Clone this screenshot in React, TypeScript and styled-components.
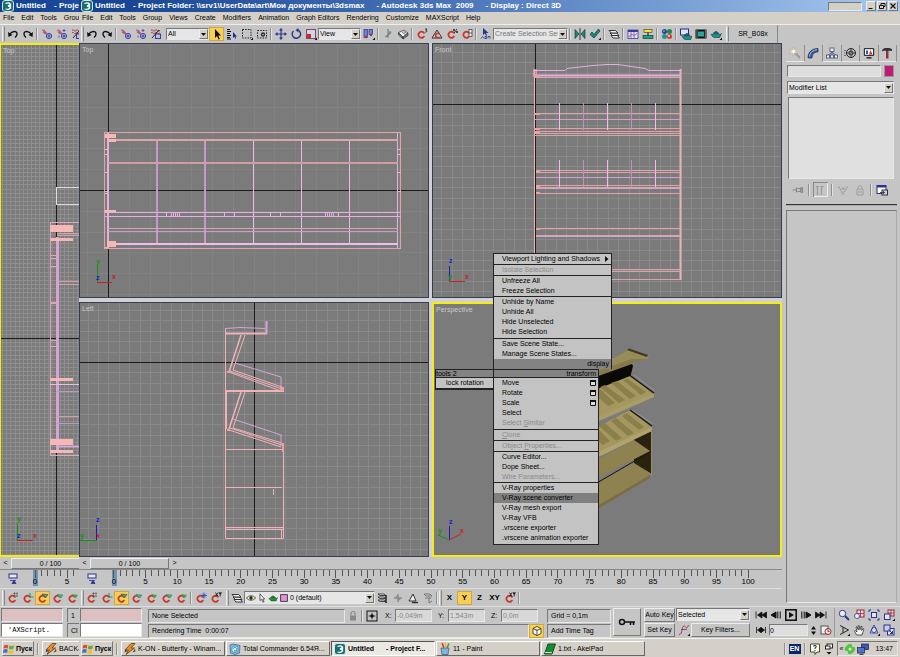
import React from "react";
import styled, { createGlobalStyle, css } from "styled-components";

const GlobalStyle = createGlobalStyle`
  * { box-sizing: border-box; }
  body { margin: 0; background: #c5c5c5; }
  body, button, input, select, textarea { font: 7px/10px "Liberation Sans", Arial, sans-serif; color: #000; }
  button, input, select, textarea { margin: 0; padding: 0; border: 0; border-radius: 0; background: none; }
`;

/* ---------- shared pieces ---------- */

const raised = css`
  border: 1px solid;
  border-color: #eee #777 #777 #eee;
`;
const sunken = css`
  border: 1px solid;
  border-color: #777 #e8e8e8 #e8e8e8 #777;
`;

const Desktop = styled.div`
  display: flex;
  height: 100vh;
  min-height: 480px;
  overflow: hidden;
`;
const Pane = styled.div<{ $strip?: boolean }>`
  display: flex;
  flex-direction: column;
  min-width: 0;
  overflow: hidden;
  white-space: nowrap;
  flex: ${(p) => (p.$strip ? "0 0 79px" : "1 1 0")};
`;
const TitleBar = styled.header<{ $strip?: boolean }>`
  display: flex;
  align-items: center;
  gap: 2px;
  flex: none;
  height: 12px;
  padding: 0 2px;
  color: #fff;
  font: bold 8px/12px "Liberation Sans", Arial, sans-serif;
  background: ${(p) => (p.$strip ? "linear-gradient(90deg, #12408f, #1d4c9d)" : "linear-gradient(90deg, #12408f, #4a74b8 45%, #a6caf0)")};
`;
const AppName = styled.span`
  flex: none;
  width: 36px;
`;
const TitlePart = styled.span<{ $gap?: boolean }>`
  flex: none;
  margin-right: ${(p) => (p.$gap ? "10px" : "0")};
`;
const TitleTools = styled.div`
  display: flex;
  align-items: center;
  gap: 1px;
  margin-left: auto;
`;
const TitleSlot = styled.div`
  ${sunken}
  width: 34px;
  height: 9px;
  margin-right: 3px;
  background: #d4d0c8;
`;
const WindowButton = styled.button`
  ${raised}
  width: 10px;
  height: 10px;
  background: #d4d0c8;
  svg { display: block; width: 8px; height: 8px; }
`;
const MenuBar = styled.nav`
  display: flex;
  align-items: center;
  flex: none;
  height: 12px;
  padding-left: 3px;
  gap: 7px;
  background: #d4d0c8;
`;
const MenuItem = styled.button`
  flex: none;
  line-height: 12px;
`;
const Toolbar = styled.div<{ $low?: boolean }>`
  display: flex;
  align-items: center;
  flex: none;
  height: ${(p) => (p.$low ? "18px" : "19px")};
  padding-left: 2px;
  background: #c5c5c5;
  border-top: 1px solid ${(p) => (p.$low ? "#dedede" : "#eee")};
`;
const Handle = styled.span<{ $wide?: boolean }>`
  flex: none;
  width: 3px;
  height: 16px;
  margin-left: ${(p) => (p.$wide ? "3px" : "0")};
  border: 1px solid;
  border-color: transparent #888 transparent #eee;
`;
const Separator = styled.span`
  flex: none;
  width: 2px;
  height: 12px;
  margin: 0 1px;
  border-left: 1px solid #8e8e8e;
  border-right: 1px solid #e2e2e2;
`;
const ToolButton = styled.button<{ $on?: boolean }>`
  display: flex;
  align-items: center;
  justify-content: center;
  flex: none;
  width: 15px;
  height: 14px;
  font-weight: bold;
  font-size: 8px;
  background: ${(p) => (p.$on ? "#f7cf54" : "transparent")};
  box-shadow: ${(p) => (p.$on ? "inset 0 0 0 1px #c9a845" : "none")};
`;
const TextTool = styled.button`
  flex: none;
  width: 49px;
  height: 18px;
  border-right: 1px solid #888;
`;
const SelectFrame = styled.span<{ $width?: string; $tall?: boolean; $before?: string; $grow?: boolean }>`
  ${sunken}
  display: flex;
  align-items: center;
  flex: ${(p) => (p.$grow ? "1 1 0" : "none")};
  width: ${(p) => p.$width ?? "auto"};
  height: ${(p) => (p.$tall ? "13px" : "12px")};
  margin-left: ${(p) => p.$before ?? "0"};
  background: #e6e6e6;
`;
const NativeSelect = styled.select<{ $dim?: boolean }>`
  appearance: none;
  flex: 1 1 0;
  min-width: 0;
  height: 10px;
  padding-left: 1px;
  color: ${(p) => (p.$dim ? "#777" : "#000")};
`;
const DropArrow = styled.span`
  ${raised}
  display: flex;
  align-items: center;
  justify-content: center;
  flex: none;
  width: 9px;
  height: 10px;
  background: #d4d0c8;
  pointer-events: none;
  svg { width: 5px; height: 3px; }
`;

function Dropdown({ label, value, width, dim, tall, before, grow, children }: {
  label: string; value: string; width?: string; dim?: boolean; tall?: boolean; before?: string; grow?: boolean; children?: React.ReactNode;
}) {
  return (
    <SelectFrame $width={width} $tall={tall} $before={before} $grow={grow}>
      {children}
      <NativeSelect aria-label={label} $dim={dim} defaultValue={value}>
        <option>{value}</option>
      </NativeSelect>
      <DropArrow><svg viewBox="0 0 5 3"><path d="M0 0h5L2.500 3z" fill="#111" /></svg></DropArrow>
    </SelectFrame>
  );
}

/* ---------- icons, drawn on a 12 x 12 board ---------- */

const magnet = <path d="M7.500 4.500A3 3 0 1 0 7.500 9M7.500 4.500l1 1M7.500 9l1-1" fill="none" stroke="#c8372d" strokeWidth="1.700" />;
const teapot = (c: string) => (
  <>
    <path d="M3 5.500h6l.5 1.500 2-1.500-1.800 4H3.800L2.500 8.500 1 6.200l1.500.5z" fill={c} stroke="#123" strokeWidth=".5" />
    <ellipse cx="6" cy="5" rx="2.600" ry=".9" fill={c} stroke="#123" strokeWidth=".5" /><circle cx="6" cy="3.700" r=".7" fill="#123" />
  </>
);
const sheets = (
  <g fill="#eee" stroke="#111" strokeWidth=".8">
    <path d="M3 7.500h6.500l2 2.500H5z" /><path d="M2 5h6.500l2.500 2.500H4.500z" /><path d="M1 2.500h6.500L10 5H3.500z" />
  </g>
);
const chain = (
  <g fill="none" stroke="#3a3f9a" strokeWidth="1"><circle cx="8" cy="8" r="2.600" fill="#b8bde8" /><path d="M6.500 8h3M8 6.500v3" /><path d="M1 2l3 .5M3.500 3L6 6M2 3.500L4.500 6" stroke="#b2556a" strokeWidth="1.200" /></g>
);

const icons: Record<string, React.ReactNode> = {
  max: <><rect x=".5" y=".5" width="11" height="11" rx="2.500" fill="#176f75" stroke="#cfe9e6" /><path d="M3.500 3.500c5-2 6 1.500 2.500 2.500 4.500.5 2 4.500-2.500 3M8.500 3.500v5" fill="none" stroke="#fff" strokeWidth="1.300" /></>,
  undo: <><path d="M2.500 6.500C5 2.500 10 2.500 10 6c0 1.500-.8 2.500-2 3.500" fill="none" stroke="#111" strokeWidth="1.400" /><path d="M1 4l.5 5L5.500 7z" fill="#111" /></>,
  redo: <><path d="M9.500 6.500C7 2.500 2 2.500 2 6c0 1.500.8 2.500 2 3.500" fill="none" stroke="#111" strokeWidth="1.400" /><path d="M11 4l-.5 5L6.500 7z" fill="#111" /></>,
  link: chain,
  unlink: <>{chain}<path d="M8 1v3M6.500 2.500h3M3 7.500v2" stroke="#3a3f9a" strokeWidth=".8" /></>,
  bind: <><rect x="5.500" y="6" width="5" height="4.500" fill="#b8bde8" stroke="#3a3f9a" /><path d="M1 2.500c2-2 2 2 4 0s2 2 5 0M1 5c2-2 2 2 4 0s2 2 5 0" stroke="#a2303c" fill="none" /><path d="M2 10l7-8" stroke="#222" /></>,
  arrow: <path d="M4 1v9l2-2 1.500 3.500 1.300-.6L7.300 7.500H10z" fill="#111" />,
  byName: <><path d="M1 1.500h3M1 3.500h4M1 5.500h3M1 7.500h4M1 9.500h3M1 11h4" stroke="#111" strokeWidth="1.200" /><path d="M7 4v6l1.500-1.200.8 2 .9-.4-.8-1.900H11z" fill="#1e2d95" /></>,
  rect: <><rect x="1.500" y="1.500" width="8.500" height="8.500" fill="none" stroke="#222" strokeDasharray="1.500 1.200" /><path d="M12 9.500V12H9.500z" fill="#111" /></>,
  crossing: <><rect x="1.500" y="2.500" width="9" height="7.500" fill="none" stroke="#222" strokeDasharray="1.500 1.200" /><circle cx="7" cy="6.500" r="2.200" fill="#333" /><circle cx="7" cy="6.500" r=".8" fill="#bbb" /></>,
  move: <><path d="M6 2v8M2 6h8" stroke="#28338f" strokeWidth="1.200" /><path d="M6 0l2 2.500H4zM6 12l2-2.500H4zM0 6l2.500-2v4zM12 6L9.500 4v4z" fill="#28338f" /></>,
  rotate: <><path d="M3.500 3A4.200 4.200 0 1 0 8 2.200" fill="none" stroke="#28338f" strokeWidth="1.400" /><path d="M8.500 0v4.500L5.500 2z" fill="#28338f" /></>,
  scale: <><rect x="1.500" y="1.500" width="9" height="9" fill="#d9d0e2" stroke="#7a4a70" /><rect x="1.500" y="6" width="4.500" height="4.500" fill="#b4303c" /><path d="M12 9.500V12H9.500z" fill="#111" /></>,
  pivot: <><rect x="1" y="1.500" width="3.500" height="8" fill="#7380c8" stroke="#28338f" strokeWidth=".7" /><rect x="6" y="1.500" width="3.500" height="5" fill="#7380c8" stroke="#28338f" strokeWidth=".7" /><circle cx="3" cy="9" r="1.200" fill="#b4303c" /><circle cx="8" cy="7" r="1.200" fill="#b4303c" /><path d="M12 9.500V12H9.500z" fill="#111" /></>,
  manipulate: <><path d="M6 1v9M3.500 9l5-4" stroke="#6d7a70" strokeWidth="1.100" /><circle cx="8" cy="4.500" r="1.300" fill="#6c966c" /></>,
  keyboard: <><path d="M1.500 4.500L7 2l4 3-5 4z" fill="#eee" stroke="#444" strokeWidth=".8" /><path d="M1.500 4.500v2.500L6 11V9zM11 5v2.500L6 11V9z" fill="#777" stroke="#333" strokeWidth=".6" /><path d="M5 4l3 2.200M6.500 3.400l3 2" stroke="#444" strokeWidth=".7" /></>,
  snap3: <>{magnet}<path d="M9 1h2L10 2.500c1.500 0 1 2-.8 1.500" fill="none" stroke="#111" strokeWidth=".8" /></>,
  snapAngle: <><path d="M1 10l5-8 5 8z" fill="none" stroke="#333" /><path d="M8.500 6A2.200 2.200 0 1 0 8.500 9" fill="none" stroke="#c8372d" strokeWidth="1.600" /></>,
  snapPercent: <>{magnet}<path d="M8 5l3-4" stroke="#111" strokeWidth=".8" /><circle cx="8" cy="2" r=".9" fill="#111" /><circle cx="11" cy="4" r=".9" fill="#111" /></>,
  snapSpinner: <>{magnet}<rect x="8" y="1.500" width="3" height="7" fill="#eee" stroke="#333" strokeWidth=".7" /><path d="M8 5h3" stroke="#333" strokeWidth=".7" /></>,
  named: <><path d="M3 0v7l2-1.500 1 2.500 1-.5L6 5h2.500z" fill="#28338f" /><path d="M1 10.500l1.500-2 1.500 2M5 8.500v2h1.500v-2zM8 10.500v-2h2v2" fill="none" stroke="#28338f" strokeWidth=".8" /></>,
  mirror: <><path d="M1 1.500v9L5 6z" fill="#1b8a78" stroke="#123" strokeWidth=".6" /><path d="M11 1.500v9L7 6z" fill="#1b8a78" stroke="#123" strokeWidth=".6" /><path d="M6 0v12" stroke="#111" strokeWidth=".8" /></>,
  align: <><path d="M1 6.500L3 4l2 2.500L9.500 1l1.500 2-6 7z" fill="#1b8a78" stroke="#134" strokeWidth=".7" /><path d="M12 9.500V12H9.500z" fill="#111" /></>,
  layers: sheets,
  curve: <><rect x="1" y="2" width="10" height="8.500" fill="#dfe3f4" stroke="#37409c" strokeWidth=".8" /><rect x="1" y="2" width="10" height="2" fill="#37409c" /><path d="M2 9c3-6 5 2 8-4M4 4v6M7 4v6" fill="none" stroke="#8c4b9b" strokeWidth=".8" /></>,
  schematic: <><rect x="2" y="1.500" width="8" height="3" fill="#f3e62f" stroke="#333" strokeWidth=".6" /><rect x="1" y="7.500" width="10" height="3" fill="#1ba37e" stroke="#123" strokeWidth=".6" /><path d="M6 4.500v3" stroke="#111" /></>,
  material: <><circle cx="3.500" cy="3.500" r="2.500" fill="#28409f" /><circle cx="8.500" cy="3.500" r="2.500" fill="#1b8a48" /><circle cx="3.500" cy="8.500" r="2.500" fill="#1a9a8a" /><circle cx="8.500" cy="8.500" r="2.500" fill="#d23c32" /><circle cx="8" cy="8" r="1" fill="#f6d3cf" /><circle cx="3" cy="3" r=".8" fill="#bcd" /></>,
  render: <><rect x=".5" y="1" width="8" height="6" fill="#dfe3f4" stroke="#1e2d85" /><g transform="translate(1 2)">{teapot("#19918f")}</g></>,
  frame: <><rect x=".5" y="1.500" width="11" height="9" fill="#111" /><rect x="3" y="3.500" width="6" height="5" fill="#2aa79d" /><path d="M1.500 3h1M1.500 5h1M1.500 7h1M1.500 9h1M9.800 3h1M9.800 5h1M9.800 7h1M9.800 9h1" stroke="#eee" /></>,
  teapot: <>{teapot("#19918f")}<path d="M12 9.500V12H9.500z" fill="#111" /></>,
  greenpot: teapot("#15a02c"),
  track: <><rect x="2" y="1" width="8" height="4" fill="#e8e8f4" stroke="#28338f" /><path d="M3 7.500h6M5 10.500l2-3 2 3z" fill="#28338f" stroke="#28338f" strokeWidth=".8" /></>,
  snapGrid: <>{magnet}<path d="M6 1.500h5M6 4h5M7.500 0v5M10 0v5" stroke="#555" strokeWidth=".6" /></>,
  snapPivot: <>{magnet}<path d="M8 1v4h3.500" stroke="#1a9a3a" fill="none" /></>,
  snapVertex: <>{magnet}<path d="M5 2l6 .5L8.500 6z" fill="#3aa08c" stroke="#444" strokeWidth=".6" /></>,
  snapEdge: <>{magnet}<path d="M5 2.500l6 .5-2 3z" fill="#48b868" stroke="#386" strokeWidth=".6" /></>,
  snapFace: <>{magnet}<path d="M5 2l6 1-2 3z" fill="#31ad4a" /></>,
  snapFreeze: <>{magnet}<path d="M9 .5v6M6 3.500h6M7 1.500l4 4M11 1.500l-4 4" stroke="#2b45d0" strokeWidth=".8" /></>,
  snapXY: <>{magnet}<path d="M5.500.5l2.500 4M8 .5l-2.500 4M9 .5l1.200 2 1.300-2M10.200 2.500v2" stroke="#111" strokeWidth=".8" /></>,
  eye: <><path d="M.5 6C3 2.500 9 2.500 11.500 6 9 9.500 3 9.500.5 6z" fill="#f2edc0" stroke="#222" strokeWidth=".9" /><circle cx="6" cy="6" r="2" fill="#222" /></>,
  cursor: <path d="M3.500 1v8L5.500 7.500 7 11l1.500-.6-1.500-3.200h2.200z" fill="#eee" stroke="#222" strokeWidth=".8" />,
  swatch: <rect x="2" y="2" width="8" height="8" fill="#e88fdc" stroke="#222" />,
  layerA: <><path d="M1 2h6l2 1.500H3zM1 5h6l2 1.500H3zM1 8h6l2 1.500H3z" fill="#eee" stroke="#222" strokeWidth=".8" /><path d="M9 3v8" stroke="#222" strokeWidth="1.500" /></>,
  layerB: <path d="M6 2v8M2 6h8M4 4l4 4" stroke="#8b8b8b" strokeWidth="1.500" />,
  layerC: <><path d="M2 9l4-7 3 7z" fill="#eee" stroke="#333" /><path d="M5 10.500h6" stroke="#333" strokeWidth="1.500" /></>,
  layerD: <><path d="M2 2h6l2 2H4zM3 6h6M7 6v5l3-2" fill="none" stroke="#777" /></>,
  lock: <><rect x="3" y="5.500" width="6" height="5" fill="#888" /><path d="M4 5.500V3.500a2 2 0 0 1 4 0v2" fill="none" stroke="#888" strokeWidth="1.200" /></>,
  transform: <><rect x="1" y="1" width="10" height="10" fill="none" stroke="#111" /><circle cx="6" cy="6" r="1.800" fill="#111" /><path d="M6 2.500v7M2.500 6h7" stroke="#111" strokeWidth=".7" /></>,
  cube: <path d="M2 3.500L6 1.500l4 2v5l-4 2-4-2zM2 3.500l4 2 4-2M6 5.500v5" fill="#fff" stroke="#222" strokeWidth=".8" />,
  tangent: <><path d="M1 10.500C5 10.500 3.500 2 6 2s2 5 4.500-1" fill="none" stroke="#b8323c" /><path d="M3 5.500h6" stroke="#28338f" strokeWidth=".7" /><path d="M12 9.500V12H9.500z" fill="#111" /></>,
  first: <path d="M1 2.500v7M11.500 3v6L7 6zM7 3v6L2.500 6z" stroke="#111" fill="#111" strokeWidth=".8" />,
  prev: <path d="M6 3v6L1 6zM7.800 2.500v7M10.200 2.500v7" stroke="#111" fill="#111" strokeWidth="1" />,
  play: <><rect x=".8" y=".8" width="10.400" height="10.400" fill="none" stroke="#111" strokeWidth="1.600" /><path d="M4 3v6l5-3z" fill="#111" /></>,
  next: <path d="M6 3v6L11 6zM4.200 2.500v7M1.800 2.500v7" stroke="#111" fill="#111" strokeWidth="1" />,
  last: <path d="M11 2.500v7M.5 3v6L5 6zM5 3v6L9.500 6z" stroke="#111" fill="#111" strokeWidth=".8" />,
  keymode: <path d="M1.500 3v6M10.500 3v6M6 3.500v5L2.500 6zM6 3.500v5L9.500 6z" stroke="#111" fill="#111" strokeWidth=".8" />,
  time: <><rect x="1" y="2" width="7" height="8" fill="#eee" stroke="#555" /><circle cx="8" cy="7.500" r="3" fill="#f0dada" stroke="#a02a38" /><path d="M8 5.500v2h1.500" stroke="#222" fill="none" strokeWidth=".7" /></>,
  zoom: <><circle cx="4.500" cy="4.500" r="3.200" fill="#eef" stroke="#333a80" /><path d="M7 7l4 4" stroke="#28338f" strokeWidth="2" /></>,
  zoomAll: <><rect x="4" y="1" width="7" height="7" fill="#e8d8da" stroke="#a02a38" /><path d="M7.500 1v7M4 4.500h7" stroke="#a02a38" strokeWidth=".8" /><circle cx="4" cy="7" r="2.500" fill="#eef" stroke="#333a80" strokeWidth=".8" /></>,
  extents: <><rect x="3.500" y="3.500" width="5" height="5" fill="#e4e4f4" stroke="#28338f" /><path d="M1 3V1h2M9 1h2v2M11 9v2H9M3 11H1V9" fill="none" stroke="#28338f" /></>,
  extentsAll: <><rect x="5" y="1" width="6" height="6" fill="#e8d8da" stroke="#a02a38" /><path d="M8 1v6M5 4h6" stroke="#a02a38" strokeWidth=".8" /><rect x="1.500" y="5" width="5.500" height="5.500" fill="#e4e4f4" stroke="#28338f" /><path d="M12 9.500V12H9.500z" fill="#111" /></>,
  fov: <><path d="M2 1.500L10.500 6 2 10.500M5 3.200v5.600" fill="none" stroke="#222" /><path d="M12 9.500V12H9.500z" fill="#111" /></>,
  pan: <path d="M3.500 11L1.500 7l1-.5L4 8 3 3l1-.4L5.300 6 5.200 1.600h1L7 5.800 8 2.200l1 .2L8.600 6.500 10 4.600l1 .5L9 11z" fill="#f4f4f4" stroke="#222" strokeWidth=".7" />,
  arc: <><path d="M6 1l4 8H2z" fill="#e4e4f4" stroke="#28338f" strokeWidth=".8" /><circle cx="6" cy="6" r="2.500" fill="none" stroke="#28338f" strokeWidth=".8" /><path d="M12 9.500V12H9.500z" fill="#111" /></>,
  maximize: <><rect x="4.500" y="4.500" width="6.500" height="6.500" fill="#e4e4f4" stroke="#28338f" /><rect x="1" y="1" width="6" height="6" fill="#c9cdea" stroke="#28338f" /><path d="M5.500 5.500l4 4M9.500 7v2.500H7" fill="none" stroke="#28338f" /></>,
  winflag: <><path d="M1 2.500Q3 1 5.300 2.300L4.800 5.500Q2.500 4.500.5 5.700z" fill="#e2502c" /><path d="M6.300 2.600Q8.500 3.600 11 2.300L10.500 5.700Q8 7 5.900 5.800z" fill="#65ae3a" /><path d="M.4 6.700Q2.500 5.500 4.700 6.500L4.200 10Q2 9 0 10.200z" fill="#3b73cf" /><path d="M5.700 6.900Q8 8 10.300 6.700L9.800 10.200Q7.500 11.300 5.200 10.200z" fill="#f0bf2f" /></>,
  winamp: <><path d="M7 .5L1 7h3.500L2 11.500 10.500 5H7L11 .5z" fill="#f08c1e" stroke="#5c4020" strokeWidth=".8" /><path d="M1.500 6L.5 9.500l3-1.500" fill="#444" /><path d="M11 5.500l.5 3-3 1z" fill="#555" /></>,
  commander: <><path d="M1 2l3-1 7 1.500-.5 7.500L6 11.500 1.500 10z" fill="#7db9e8" stroke="#28609f" strokeWidth=".7" /><circle cx="6" cy="6.200" r="3.300" fill="#d8f0fa" stroke="#2a80a8" strokeWidth=".7" /><path d="M4 6c.5-2 3.500-2 4 0s-2 2.500-3 1.500" fill="none" stroke="#2a8a78" /></>,
  paint: <><path d="M2 5h8l-1 6.500H3z" fill="#7fb4e6" stroke="#345" strokeWidth=".6" /><path d="M3 0l2 5" stroke="#d9372c" strokeWidth="1.500" /><path d="M6.500 0v5" stroke="#e8b12a" strokeWidth="1.500" /><path d="M10 .5l-2 4.500" stroke="#3b9c3a" strokeWidth="1.500" /></>,
  akel: <><path d="M4 1h7.500L8 11H.5z" fill="#168a37" stroke="#0b4b1c" /><path d="M1 9.500l7 .2" stroke="#eee" strokeWidth=".9" /></>,
  help: <><path d="M1.500 1h9v8H8l-2 2.500V9H1.500z" fill="#fffbd2" stroke="#222" strokeWidth=".8" /><path d="M4.500 3.500C5 1.800 8 2.500 7 4.200L6 5.200V6M6 7v1" stroke="#1c3fa0" fill="none" strokeWidth="1.100" /></>,
  restore: <><rect x="4" y="1" width="5.500" height="4" fill="#fff" stroke="#111" strokeWidth=".9" /><rect x="2.500" y="3" width="4.500" height="3" fill="#fff" stroke="#111" strokeWidth=".9" /><path d="M3.500 9h5L6 11.500z" fill="#111" /></>,
  flower: <><g fill="#4fc54a"><circle cx="6" cy="3" r="2.300" /><circle cx="6" cy="9" r="2.300" /><circle cx="3" cy="6" r="2.300" /><circle cx="9" cy="6" r="2.300" /><circle cx="4" cy="4" r="2" /><circle cx="8" cy="8" r="2" /></g><circle cx="6" cy="6" r="1.500" fill="#eef7b8" /></>,
  network: <><rect x="4.500" y="1" width="7" height="5.500" fill="#3e56b8" stroke="#223" strokeWidth=".7" /><rect x=".5" y="4.500" width="7" height="5.500" fill="#5470d0" stroke="#223" strokeWidth=".7" /><path d="M2.500 11.300h4" stroke="#223" /></>,
  create: <><path d="M5 5l6 6" stroke="#999" strokeWidth="1.800" /><path d="M4.500 0l.8 3L8.500 2 6.300 4.500 8.500 6.500 5.300 6l-.8 3-.8-3L.5 7l2.200-2.500L.5 2.500 3.700 3z" fill="#fff7d0" stroke="#999" strokeWidth=".4" /></>,
  modify: <><path d="M1 11C1 5 5 1.500 11 1.500V5C7 5 5 7.500 5 11z" fill="#3c5896" stroke="#1a2850" strokeWidth=".7" /><path d="M2.500 9.500C3 5.500 6 3 10 2.800" stroke="#a9c0ea" fill="none" /></>,
  hierarchy: <g fill="#f0f0f8" stroke="#444c70" strokeWidth=".8"><path d="M6 4v4M2 8.500L6 5l4 3.500" fill="none" /><rect x="4" y="1" width="4" height="3.500" /><rect x=".5" y="8" width="3" height="3" /><rect x="4.500" y="8" width="3" height="3" /><rect x="8.500" y="8" width="3" height="3" /></g>,
  motion: <><circle cx="7" cy="6" r="4.500" fill="#bbb" stroke="#222" /><circle cx="7" cy="6" r="2" fill="#eee" stroke="#222" /><path d="M7 1.500v9M2.500 6h9" stroke="#222" strokeWidth=".7" /><path d="M0 3.500h2M0 6h1.500M0 8.500h2" stroke="#444" strokeWidth=".7" /></>,
  display: <><rect x=".8" y="1" width="10.400" height="8" rx="1" fill="#333" /><rect x="2" y="2.200" width="8" height="5.600" fill="#fff" /><path d="M3 7V3.500h2V7z" fill="#2b56c4" /><path d="M6 7.500l1.500-4.500 2 4.500z" fill="#d8282f" /><path d="M3.500 10.800h5" stroke="#333" strokeWidth="1.600" /></>,
  hammer: <><path d="M5 3h2.500v8.500H5z" fill="#8a3434" /><path d="M1 3.500C2 1 4 .8 8 1l3 1v2L8 3.800H4C3 3.500 2 3.500 1 4.500z" fill="#333" /></>,
  pin: <path d="M.5 6h4M4.500 3.500v5M5.500 4.500h3v3h-3M9 3v6M10.500 3v6" stroke="#888" fill="none" strokeWidth="1.200" />,
  showEnd: <path d="M3.500 2v9M7.500 2v9M2 2.500h3M6.500 2.500h3" stroke="#999" strokeWidth="1.200" fill="none" />,
  unique: <><path d="M1.500 2.500L6 10l4.500-7.500" stroke="#999" fill="none" strokeDasharray="2 .7" strokeWidth="1.200" /><circle cx="6" cy="4.500" r="1.500" fill="#aaa" /></>,
  trash: <><path d="M3 5h6v6H3zM4 4c0-3 4-3 4 0" stroke="#999" fill="#ccc" /><path d="M5 6.500v3M7 6.500v3" stroke="#999" /></>,
  configure: <><rect x="1" y="1.500" width="9" height="8" fill="#fff" stroke="#28338f" /><rect x="1" y="1.500" width="9" height="2" fill="#28338f" /><rect x="6" y="6" width="5.500" height="5" fill="#cdd0ea" stroke="#333" /><path d="M4 8.500h5M7.500 7v3" stroke="#333" strokeWidth=".8" /></>,
};

const IconSvg = styled.svg`
  display: block;
  flex: none;
  width: 12px;
  height: 12px;
`;
const Icon = ({ name }: { name: string }) => <IconSvg viewBox="0 0 12 12" aria-hidden="true">{icons[name]}</IconSvg>;
const Tools = ({ names, on }: { names: string[]; on?: string }) => (
  <>
    {names.map((n) => (
      <ToolButton key={n} $on={n === on} aria-label={n}><Icon name={n} /></ToolButton>
    ))}
  </>
);
const LayerIcons = styled.span`
  display: flex;
  gap: 1px;
  padding-left: 1px;
  ${IconSvg} { width: 10px; height: 10px; }
`;

/* ---------- viewports ---------- */

const Workspace = styled.main`
  display: flex;
  flex: 1 1 0;
  min-height: 0;
`;
const Stage = styled.div`
  display: flex;
  flex-direction: column;
  flex: 1 1 0;
  min-width: 0;
`;
const Viewports = styled.div<{ $single?: boolean }>`
  position: relative;
  display: grid;
  flex: 1 1 0;
  min-height: 0;
  gap: 4px 3px;
  grid-template-columns: ${(p) => (p.$single ? "minmax(0, 1fr)" : "repeat(2, minmax(0, 1fr))")};
  grid-template-rows: ${(p) => (p.$single ? "minmax(0, 1fr)" : "repeat(2, minmax(0, 1fr))")};
  background: #d0d0d6;
`;
const Viewport = styled.section<{ $active?: boolean; $cut?: boolean }>`
  position: relative;
  min-height: 0;
  overflow: hidden;
  background: #7b7b7b;
  border: ${(p) => (p.$active ? "2px solid #f4ee10" : "1px solid #363f4e")};
  border-left-width: ${(p) => (p.$cut ? "1px" : p.$active ? "2px" : "1px")};
  border-right-width: ${(p) => (p.$cut ? "0" : p.$active ? "2px" : "1px")};
`;
const ViewLabel = styled.h2`
  position: absolute;
  top: 1px;
  left: 2px;
  margin: 0;
  color: #c9c9c9;
  font: 7px/10px "Liberation Sans", Arial, sans-serif;
`;
const Scene = styled.svg`
  display: block;
  width: 100%;
  height: 100%;
`;
const AxisText = styled.text`
  font: bold 7px "Liberation Sans", Arial, sans-serif;
`;

type Box = [number, number, number, number];
const PINK = "#f0b3b8";
const LILAC = "#e4b0df";

function Grid({ box, cx, cy, step, color }: { box: Box; cx: number; cy: number; step: number; color: string }) {
  const [x, y, w, h] = box;
  let d = "";
  for (let i = Math.ceil((x - cx) / step); cx + i * step < x + w; i++) d += `M${Math.round(cx + i * step) + 0.5} ${y}v${h}`;
  for (let i = Math.ceil((y - cy) / step); cy + i * step < y + h; i++) d += `M${x} ${Math.round(cy + i * step) + 0.5}h${w}`;
  return (
    <>
      <path d={d} stroke={color} />
      <path d={`M${cx + 0.5} ${y}v${h}M${x} ${cy + 0.5}h${w}`} stroke="#1c1c1c" />
    </>
  );
}

const H = ({ x1, x2, ys, c = PINK, w = 1 }: { x1: number; x2: number; ys: number[]; c?: string; w?: number }) => (
  <path d={ys.map((y) => `M${x1} ${y}H${x2}`).join("")} stroke={c} strokeWidth={w} />
);
const V = ({ y1, y2, xs, c = LILAC, w = 1 }: { y1: number; y2: number; xs: number[]; c?: string; w?: number }) => (
  <path d={xs.map((x) => `M${x} ${y1}V${y2}`).join("")} stroke={c} strokeWidth={w} />
);
const Gizmo = ({ lines, labels }: { lines: [string, string][]; labels: [string, number, number, string][] }) => (
  <>
    {lines.map(([d, c]) => <path key={d} d={d} stroke={c} fill="none" />)}
    {labels.map(([t, x, y, c]) => <AxisText key={t} x={x} y={y} fill={c}>{t}</AxisText>)}
  </>
);
const RED = "#c92020";
const GREEN = "#149414";
const BLUE = "#1b1bc9";

function Canvas({ box, children }: { box: Box; children: React.ReactNode }) {
  return <Scene viewBox={box.join(" ")} preserveAspectRatio="xMinYMin slice">{children}</Scene>;
}

function TopScene() {
  const box: Box = [80, 44, 348, 253];
  return (
    <Canvas box={box}>
      <Grid box={box} cx={108} cy={190} step={20.8} color="#828282" />
      <rect x="104.500" y="132.500" width="296" height="116" fill="none" stroke="#dea6ab" />
      <V xs={[157, 205]} y1={140} y2={244} c="#c69ac2" w={2} />
      <V xs={[253.5, 301.5, 349.5]} y1={140} y2={244} c="#edb9e8" w={1} />
      <V xs={[397.5]} y1={133} y2={248} />
      <V xs={[107.5, 108.5]} y1={133} y2={248} />
      <H x1={108} x2={398} ys={[140]} c="#dda6ab" w={2} />
      <H x1={108} x2={398} ys={[163]} c="#cf9da2" w={2} />
      <H x1={105} x2={401} ys={[212.5, 216.5]} c={LILAC} />
      <H x1={108} x2={398} ys={[228.5]} c="#d8a5ad" />
      <H x1={108} x2={398} ys={[231.5]} c="#c79fc6" />
      <H x1={108} x2={398} ys={[244]} c="#f0bce9" w={2} />
      <path d="M105 134h11v4h-11zM108 139h8v3h-8zM105 210h11v2h-11zM107 241h9v6h-9z" fill="#f4b9b7" />
      <H x1={105} x2={108} ys={[149.5, 154.5, 172.5, 191.5, 193.5, 247.5]} />
      <H x1={397} x2={401} ys={[149.5, 154.5, 172.5, 191.5]} />
      <V xs={[166.5, 171.5, 173.5, 175.5, 177.5, 179.5, 224.5, 234.5, 270.5, 280.5, 325.5, 327.5, 329.5, 331.5, 333.5, 338.5]} y1={213} y2={216} />
      <Gizmo lines={[["M97.5 265V282", GREEN], ["M97 282.500H112", RED]]} labels={[["y", 96, 264, GREEN], ["z", 96, 280, BLUE], ["x", 112, 279, RED]]} />
    </Canvas>
  );
}

function FrontScene() {
  const box: Box = [433, 44, 348, 253];
  return (
    <Canvas box={box}>
      <Grid box={box} cx={535} cy={104} step={10.4} color="#898989" />
      <path d="M534.5 70V279" stroke={PINK} />
      <path d="M533 69h4v8h-4z" fill={PINK} opacity=".7" />
      <V xs={[680.5]} y1={69} y2={280} c="#e9b0b6" w={2} />
      <path d="M534 70.500H565L567 68.500 593 65.500 607 64.500H618L645 68.500 649 70.500H681" fill="none" stroke={LILAC} />
      <H x1={535} x2={680} ys={[75.5]} c={LILAC} w={2} />
      <H x1={535} x2={680} ys={[77.5, 113.5, 128.5, 131.5, 133.5, 135.5]} c="#dfa4aa" />
      <H x1={535} x2={680} ys={[119.5, 177.5, 188.5, 236.5]} c="#d0a2cc" />
      <H x1={535} x2={680} ys={[170.5, 172.5, 185.5, 187.5, 193.5, 228.5, 235.5, 269.5, 271.5, 279.5]} c="#dfa4aa" />
      <V xs={[559.5, 607.5, 655.5]} y1={103} y2={130} c="#efbdea" />
      <V xs={[583.5, 631.5]} y1={103} y2={130} c="#bb94b8" />
      <V xs={[559.5, 607.5, 655.5]} y1={160} y2={187} c="#efbdea" />
      <V xs={[583.5, 631.5]} y1={160} y2={187} c="#bb94b8" />
      <H x1={534} x2={540} ys={[76, 114, 129, 132, 171, 186, 193, 229]} c="#f0a09c" w={2} />
      <path d="M535.5 140V253" stroke="#1c1c1c" />
      <Gizmo lines={[["M449.5 266V281", BLUE], ["M449 281.500H465", RED]]} labels={[["z", 449, 263, BLUE], ["y", 448, 279, GREEN], ["x", 465, 279, RED]]} />
    </Canvas>
  );
}

function LeftScene() {
  const box: Box = [80, 303, 348, 253];
  return (
    <Canvas box={box}>
      <Grid box={box} cx={254} cy={362} step={10.4} color="#898989" />
      <g fill="none" stroke={PINK}>
        <path d="M225.500 328V538.500H283.500V443M225 449.500H283M225 487.500H282M273.500 489v6M225 527.500H283M225 529.500H283M281.500 530v8" />
        <path d="M225 333.500H267" strokeWidth="2" />
        <path d="M225 391H284" strokeWidth="2" />
        <path d="M226.500 392V429" />
        <path d="M241 335L229 372M241 392L229 429" strokeWidth="1.500" />
        <path d="M245 335L233 370 282 387M229 372L281 391M230 371L282 389M245 392L233 428 282 443M229 430L281 447M230 428L282 445" />
      </g>
      <g fill="none" stroke="#d4a6d4">
        <path d="M225 328.500L240 327.500 265 328.500M235 363L281 377V388M233 419L281 435V446" />
        <path d="M266.500 321V334" strokeWidth="2" />
      </g>
      <path d="M280 387h4v4h-4zM282 443h2v9h-2zM227 371h3v2h-3zM227 429h3v2h-3z" fill="#f0a09c" />
      <Gizmo lines={[["M96.5 525V540", BLUE], ["M80 540.500H97", GREEN]]} labels={[["z", 96, 522, BLUE], ["y", 80, 538, GREEN], ["x", 96, 538, RED]]} />
    </Canvas>
  );
}

function PerspectiveScene() {
  return (
    <Canvas box={[434, 304, 346, 251]}>
      <path d="M590 372L628 350 649 356 648 359 634 361 632 364 590 380z" fill="#978b59" />
      <path d="M590 374L632 359 648 359 634 362 632 364 590 381z" fill="#857a48" />
      <path d="M627 350L629 348.500 648 355 647 357z" fill="#40391b" />
      <path d="M590 379L632 364 633 366 630 378 590 392z" fill="#0b0905" />
      <path d="M590 392L630 376 654 395 590 423z" fill="#a5985f" />
      <path d="M599 388l16 15-7 3-9-8zM605 385l20 15-6 3-19-16zM617 381l19 15-6 3-19-16zM628 379l18 13-5 3-18-15z" fill="#8b7f4c" />
      <path d="M590 420L654 393V397L590 425z" fill="#a99d69" />
      <path d="M630 375.500L654 393" stroke="#18150a" fill="none" strokeWidth="1.200" />
      <path d="M634 375L655 391M632 410L653 424" stroke="#969696" fill="none" />
      <path d="M590 431L630 410 652 428 590 457z" fill="#a5985f" />
      <path d="M599 430l11 11-7 4-4-3zM605 423l17 15-6 3-17-15zM616 418l18 15-6 3-17-15zM627 413l17 14-5 3-17-14z" fill="#8b7f4c" />
      <path d="M630 410L652 426" stroke="#18150a" strokeWidth="1.200" />
      <path d="M634 438L652 431V474L634 464z" fill="#29220f" />
      <path d="M590 464L634 440 650 451 590 482z" fill="#8e8250" />
      <path d="M590 487L634 463 650 473V477L590 512z" fill="#8e8250" />
      <path d="M599 505L650 475V478L599 508z" fill="#796e3f" />
      <path d="M590 487L650 452" stroke="#17130a" />
      <path d="M590 456L652 427V431L590 461z" fill="#b0a46e" />
      <path d="M651.5 430V476" stroke="#9b8f60" />
      <Gizmo lines={[["M449.5 526V540", BLUE], ["M449 540L461 534", RED], ["M449 540L438 535", GREEN]]} labels={[["z", 449, 524, BLUE], ["x", 460, 533, RED], ["y", 438, 533, GREEN]]} />
    </Canvas>
  );
}

function StripScene() {
  const box: Box = [1, 45, 78, 510];
  return (
    <Canvas box={box}>
      <Grid box={box} cx={56} cy={338} step={4.15} color="#8e8e8e" />
      <rect x="56.500" y="187.500" width="30" height="17" fill="none" stroke="#ddd" />
      <rect x="50.500" y="222.500" width="40" height="233" fill="none" stroke="#e0a7b4" />
      <V xs={[57.5]} y1={237} y2={450} c="#d5a4d3" w={3} />
      <path d="M50 225h23v7H50zM50 238h23v3H50zM50 378h23v3H50zM50 439h23v6H50zM50 450h23v3H50z" fill="#f5b8b6" />
      <H x1={57} x2={79} ys={[233.5, 235.5, 281.5, 284.5, 416.5]} c="#d2a0a6" />
      <H x1={50} x2={57} ys={[255.5, 258.5, 266.5, 302.5, 303.5, 340.5, 346.5]} c="#dda4b8" />
      <H x1={50} x2={79} ys={[384.5]} c="#efb9e9" />
      <H x1={57} x2={79} ys={[391.5, 423.5]} c="#bb98c0" />
      <H x1={57} x2={79} ys={[446.5]} c="#d8a9d8" w={2} />
      <Gizmo lines={[["M17.5 524V540", GREEN], ["M17 540.500H33", RED]]} labels={[["y", 17, 521, GREEN], ["z", 17, 538, BLUE], ["x", 33, 538, RED]]} />
    </Canvas>
  );
}

/* ---------- quad menu ---------- */

const Quad = styled.div`
  position: absolute;
  top: 210px;
  left: 356px;
  display: grid;
  grid-template-columns: 58px 106px 13px;
`;
const QuadUpper = styled.div`
  grid-column: 2 / 4;
  background: #c3c3c3;
  border: 1px solid #222;
  border-bottom: 0;
`;
const QuadLower = styled.div`
  grid-column: 2;
  background: #c3c3c3;
  border: 1px solid #222;
`;
const QuadSide = styled.div`
  align-self: start;
  background: #c3c3c3;
  border: 1px solid #222;
  border-width: 1px 0 2px 1px;
`;
const QuadTitle = styled.div<{ $left?: boolean; $above?: boolean }>`
  height: ${(p) => (p.$above ? "10px" : "8px")};
  padding: 0 2px 0 0;
  line-height: ${(p) => (p.$above ? "9px" : "7px")};
  text-align: ${(p) => (p.$left ? "left" : "right")};
  background: #838383;
  border-bottom: ${(p) => (p.$above ? "0" : "1px solid #222")};
`;
const QuadGroup = styled.div<{ $long?: boolean; $last?: boolean }>`
  padding-bottom: ${(p) => (p.$long ? "1px" : "0")};
  border-bottom: ${(p) => (p.$last ? "0" : "1px solid #222")};
`;
const QuadItem = styled.button<{ $hot?: boolean; $side?: boolean }>`
  display: flex;
  align-items: center;
  justify-content: space-between;
  width: 100%;
  height: 10px;
  padding: 0 1px 0 ${(p) => (p.$side ? "10px" : "8px")};
  background: ${(p) => (p.$hot ? "#808080" : "transparent")};
  &:disabled { color: #8b8b8b; }
  svg { flex: none; width: 6px; height: 6px; margin-right: 1px; }
`;
type Entry = { t: string; off?: boolean; hot?: boolean; box?: boolean; sub?: boolean };
const displayMenu: Entry[][] = [
  [{ t: "Viewport Lighting and Shadows", sub: true }],
  [{ t: "Isolate Selection", off: true }],
  [{ t: "Unfreeze All" }, { t: "Freeze Selection" }],
  [{ t: "Unhide by Name" }, { t: "Unhide All" }, { t: "Hide Unselected" }, { t: "Hide Selection" }],
  [{ t: "Save Scene State..." }, { t: "Manage Scene States..." }],
];
const transformMenu: Entry[][] = [
  [{ t: "Move", box: true }, { t: "Rotate", box: true }, { t: "Scale", box: true }, { t: "Select" }, { t: "Select _Similar", off: true }],
  [{ t: "_Clone", off: true }],
  [{ t: "Object _Properties...", off: true }],
  [{ t: "Curve Editor..." }, { t: "Dope Sheet..." }, { t: "Wire Parameters...", off: true }],
  [{ t: "V-Ray properties" }, { t: "V-Ray scene converter", hot: true }, { t: "V-Ray mesh export" }, { t: "V-Ray VFB" }, { t: ".vrscene exporter" }, { t: ".vrscene animation exporter" }],
];

function QuadLabel({ text }: { text: string }) {
  const at = text.indexOf("_");
  if (at < 0) return <span>{text}</span>;
  return <span>{text.slice(0, at)}<u>{text[at + 1]}</u>{text.slice(at + 2)}</span>;
}
function QuadGroups({ groups }: { groups: Entry[][] }) {
  return (
    <>
      {groups.map((g, i) => (
        <QuadGroup key={i} $long={g.length > 3} $last={i === groups.length - 1}>
          {g.map((e) => (
            <QuadItem key={e.t} disabled={e.off} $hot={e.hot}>
              <QuadLabel text={e.t} />
              {e.box && <svg viewBox="0 0 6 6"><path d="M.5.500h5v5h-5z" fill="#ddd" stroke="#111" /><path d="M0 1h6" stroke="#111" strokeWidth="2" /></svg>}
              {e.sub && <svg viewBox="0 0 6 6"><path d="M2 0v6l3.500-3z" fill="#111" /></svg>}
            </QuadItem>
          ))}
        </QuadGroup>
      ))}
    </>
  );
}
function QuadMenu() {
  return (
    <Quad>
      <QuadUpper><QuadGroups groups={displayMenu} /><QuadTitle $above>display</QuadTitle></QuadUpper>
      <QuadSide>
        <QuadTitle $left>tools 2</QuadTitle>
        <QuadItem $side>lock rotation</QuadItem>
      </QuadSide>
      <QuadLower><QuadTitle>transform</QuadTitle><QuadGroups groups={transformMenu} /></QuadLower>
    </Quad>
  );
}

/* ---------- time slider and track bar ---------- */

const SliderRow = styled.div`
  display: flex;
  flex: none;
  height: 13px;
  align-items: center;
  border-bottom: 1px solid #8a8a8a;
`;
const SliderArrow = styled.button`
  flex: none;
  width: 11px;
  height: 11px;
`;
const SliderThumb = styled.button`
  ${raised}
  flex: none;
  width: 79px;
  height: 11px;
`;
const TrackRow = styled.div`
  display: flex;
  flex: none;
  height: 18px;
  padding-right: 18px;
`;
const TrackIcon = styled.button`
  display: flex;
  align-items: center;
  justify-content: flex-end;
  flex: none;
  width: 19px;
`;
const Frames = styled.div<{ $count: number }>`
  display: grid;
  grid-template-columns: ${(p) => (p.$count > 3 ? `repeat(${p.$count}, minmax(0, 1fr))` : `repeat(${p.$count}, 32px)`)};
  flex: 1 1 0;
  min-width: 0;
`;
const FrameGroup = styled.div`
  display: flex;
  flex-direction: column;
  align-items: center;
  line-height: 8px;
`;
const Ticks = styled.div`
  display: flex;
  width: 100%;
  height: 8px;
`;
const Tick = styled.i<{ $hidden?: boolean; $major?: boolean }>`
  flex: 1 1 0;
  height: ${(p) => (p.$major ? "8px" : "6px")};
  background: linear-gradient(#555, #555) center / 1px 100% no-repeat;
  visibility: ${(p) => (p.$hidden ? "hidden" : "visible")};
`;
const FrameNumber = styled.span<{ $current?: boolean }>`
  position: relative;
  font-size: 8px;
  &::before {
    content: "";
    display: ${(p) => (p.$current ? "block" : "none")};
    position: absolute;
    z-index: -1;
    left: 0;
    bottom: 0;
    width: 5px;
    height: 16px;
    background: #6d95b0;
  }
`;
const Layered = styled.div`
  position: relative;
  z-index: 0;
`;

function Timeline({ count }: { count: number }) {
  return (
    <Layered>
      <SliderRow>
        <SliderArrow>&lt;</SliderArrow>
        <SliderThumb>0 / 100</SliderThumb>
        {count > 3 && <SliderArrow>&gt;</SliderArrow>}
      </SliderRow>
      <TrackRow>
        <TrackIcon aria-label="Mini curve editor"><Icon name="track" /></TrackIcon>
        <Frames $count={count}>
          {Array.from({ length: count }, (_, n) => (
            <FrameGroup key={n}>
              <Ticks>
                {[-2, -1, 0, 1, 2].map((k) => (
                  <Tick key={k} $major={k === 0} $hidden={(n === 0 && k < 0) || (n === 20 && k > 0)} />
                ))}
              </Ticks>
              <FrameNumber $current={n === 0}>{n * 5}</FrameNumber>
            </FrameGroup>
          ))}
        </Frames>
      </TrackRow>
    </Layered>
  );
}

/* ---------- command panel ---------- */

const Panel = styled.aside`
  display: flex;
  flex-direction: column;
  flex: none;
  width: 118px;
  padding: 2px 3px 3px 4px;
`;
const Tabs = styled.div`
  display: flex;
  height: 17px;
`;
const Tab = styled.button<{ $on?: boolean }>`
  display: flex;
  align-items: center;
  justify-content: center;
  width: 19px;
  border-right: 1px solid #909090;
  border-bottom: 1px solid ${(p) => (p.$on ? "#c5c5c5" : "#e8e8e8")};
`;
const NameRow = styled.div`
  display: flex;
  gap: 3px;
  margin: 3px 3px 4px 1px;
`;
const NameInput = styled.input`
  ${sunken}
  flex: 1 1 0;
  min-width: 0;
  height: 12px;
  background: #dedede;
`;
const ColorButton = styled.button`
  width: 10px;
  height: 12px;
  background: #bf1b72;
  border: 1px solid #999;
`;
const ModifierRow = styled.div`
  display: flex;
  margin: 0 3px 3px 1px;
`;
const StackBox = styled.div`
  ${sunken}
  height: 82px;
  margin: 0 3px 3px 2px;
  background: #e0e0e0;
`;
const StackTools = styled.div`
  display: flex;
  justify-content: space-between;
  align-items: center;
  height: 15px;
  padding: 0 7px 0 4px;
`;
const StackTool = styled.button<{ $on?: boolean }>`
  display: flex;
  justify-content: center;
  align-items: center;
  width: 15px;
  height: 15px;
  box-shadow: ${(p) => (p.$on ? "inset 1px 1px #888, inset -1px -1px #eee" : "none")};
`;
const Rule = styled.hr`
  flex: none;
  width: 100%;
  height: 2px;
  margin: 7px 0 4px;
  border: 0;
  border-top: 1px solid #333;
  border-bottom: 1px solid #aaa;
`;
const Rollouts = styled.div`
  ${sunken}
  flex: 1 1 0;
  border-right-color: #aaa;
`;

function CommandPanel() {
  return (
    <Panel>
      <Tabs>
        {["create", "modify", "hierarchy", "motion", "display", "hammer"].map((n) => (
          <Tab key={n} $on={n === "modify"} aria-label={n}><Icon name={n} /></Tab>
        ))}
      </Tabs>
      <NameRow>
        <NameInput aria-label="Object name" />
        <ColorButton aria-label="Object color" />
      </NameRow>
      <ModifierRow><Dropdown label="Modifier List" value="Modifier List" grow tall /></ModifierRow>
      <StackBox />
      <StackTools>
        <StackTool aria-label="Pin stack"><Icon name="pin" /></StackTool>
        <Separator />
        <StackTool $on aria-label="Show end result"><Icon name="showEnd" /></StackTool>
        <Separator />
        <StackTool aria-label="Make unique"><Icon name="unique" /></StackTool>
        <StackTool aria-label="Remove modifier"><Icon name="trash" /></StackTool>
        <Separator />
        <StackTool aria-label="Configure modifier sets"><Icon name="configure" /></StackTool>
      </StackTools>
      <Rule />
      <Rollouts />
    </Panel>
  );
}

/* ---------- status area ---------- */

const Status = styled.footer<{ $strip?: boolean }>`
  display: flex;
  flex: none;
  height: 32px;
  padding: 1px ${(p) => (p.$strip ? "0" : "4px")} 1px 1px;
  border-top: 1px solid #dedede;
`;
const Listener = styled.div`
  display: grid;
  grid-template-rows: 14px 14px;
  gap: 1px;
  flex: none;
  width: 62px;
`;
const ListenerInput = styled.input<{ $pink?: boolean }>`
  ${sunken}
  width: 100%;
  min-width: 0;
  padding-left: 6px;
  background: ${(p) => (p.$pink ? "#dcc0c2" : "#fff")};
  font: 7px/12px "Liberation Mono", monospace;
`;
const StatusMain = styled.div`
  display: grid;
  grid-template-rows: 15px 15px;
  flex: 1 1 0;
  min-width: 0;
  margin-left: 6px;
`;
const StatusRow = styled.div`
  display: flex;
  align-items: center;
  min-width: 0;
`;
const Message = styled.div`
  ${sunken}
  flex: 1 1 0;
  min-width: 0;
  height: 14px;
  padding-left: 3px;
  line-height: 12px;
  overflow: hidden;
`;
const CoordLabel = styled.label`
  display: flex;
  align-items: center;
  flex: none;
  width: 53px;
  padding-left: 6px;
`;
const CoordInput = styled.input`
  ${sunken}
  width: 37px;
  height: 13px;
  margin-left: auto;
  padding-left: 1px;
  background: #d8d8d8;
  color: #888;
`;
const InfoBox = styled.div<{ $apart?: boolean }>`
  ${sunken}
  flex: none;
  width: 64px;
  height: 14px;
  margin-left: ${(p) => (p.$apart ? "9px" : "3px")};
  padding-left: 3px;
  line-height: 12px;
`;
const KeyButton = styled.button`
  ${raised}
  flex: none;
  width: 28px;
  height: 28px;
  margin: 0 3px 0 2px;
  svg { display: block; width: 18px; height: 12px; margin: 0 auto; }
`;
const KeyGrid = styled.div`
  display: grid;
  grid-template-columns: 31px 74px;
  grid-template-rows: 14px 14px;
  gap: 1px;
  flex: none;
`;
const PushButton = styled.button`
  ${raised}
  flex: 1 1 0;
  min-width: 0;
  height: 14px;
`;
const FlexCell = styled.div`
  display: flex;
  align-items: center;
`;
const PlayGrid = styled.div`
  display: grid;
  grid-template-rows: 14px 14px;
  gap: 1px;
  flex: none;
  width: 81px;
  margin-left: 3px;
`;
const FrameInput = styled.input`
  ${sunken}
  width: 39px;
  height: 12px;
  margin-left: 1px;
  background: #dedede;
`;
const Spinner = styled.span`
  display: flex;
  justify-content: center;
  width: 10px;
  svg { width: 5px; height: 9px; }
`;
const NavGrid = styled.div`
  display: grid;
  grid-template-columns: repeat(4, 15px);
  grid-template-rows: 14px 14px;
  gap: 1px 0;
  flex: none;
  padding-left: 1px;
  border-left: 1px solid #999;
`;
const StripTail = styled.div`
  display: grid;
  grid-template-rows: 14px 14px;
  gap: 1px;
  flex: 1 1 0;
  min-width: 0;
  margin-left: 4px;
`;
const StripCell = styled.span`
  padding-left: 3px;
  line-height: 13px;
  border-left: 1px solid #777;
  border-top: 1px solid #777;
`;

function StatusArea() {
  return (
    <Status>
      <Listener>
        <ListenerInput $pink aria-label="Macro recorder" />
        <ListenerInput aria-label="Listener" />
      </Listener>
      <StatusMain>
        <StatusRow>
          <Message>None Selected</Message>
          <ToolButton aria-label="Selection lock"><Icon name="lock" /></ToolButton>
          <Separator />
          <ToolButton aria-label="Transform type-in"><Icon name="transform" /></ToolButton>
          <CoordLabel>X:<CoordInput defaultValue="-0,049m" /></CoordLabel>
          <CoordLabel>Y:<CoordInput defaultValue="1,543m" /></CoordLabel>
          <CoordLabel>Z:<CoordInput defaultValue="0,0m" /></CoordLabel>
          <InfoBox $apart>Grid = 0,1m</InfoBox>
        </StatusRow>
        <StatusRow>
          <Message>Rendering Time&nbsp; 0:00:07</Message>
          <ToolButton $on aria-label="Adaptive degradation"><Icon name="cube" /></ToolButton>
          <InfoBox>Add Time Tag</InfoBox>
        </StatusRow>
      </StatusMain>
      <KeyButton aria-label="Set keys">
        <svg viewBox="0 0 18 12"><circle cx="4" cy="6" r="2.500" fill="none" stroke="#111" strokeWidth="1.500" /><path d="M6.500 6H17M12.500 6v3M15.500 6v3" stroke="#111" strokeWidth="1.600" /></svg>
      </KeyButton>
      <KeyGrid>
        <PushButton>Auto Key</PushButton>
        <Dropdown label="Key set" value="Selected" width="74px" tall />
        <PushButton>Set Key</PushButton>
        <FlexCell>
          <ToolButton aria-label="Tangents"><Icon name="tangent" /></ToolButton>
          <PushButton>Key Filters...</PushButton>
        </FlexCell>
      </KeyGrid>
      <PlayGrid>
        <FlexCell><Tools names={["first", "prev", "play", "next", "last"]} /></FlexCell>
        <FlexCell>
          <ToolButton aria-label="Key mode"><Icon name="keymode" /></ToolButton>
          <FrameInput aria-label="Frame" defaultValue="0" />
          <Spinner><svg viewBox="0 0 5 9"><path d="M0 3.500h5L2.500 0zM0 5.500h5L2.500 9z" fill="#111" /></svg></Spinner>
          <ToolButton aria-label="Time configuration"><Icon name="time" /></ToolButton>
        </FlexCell>
      </PlayGrid>
      <NavGrid><Tools names={["zoom", "zoomAll", "extents", "extentsAll", "fov", "pan", "arc", "maximize"]} /></NavGrid>
    </Status>
  );
}

/* ---------- task bar ---------- */

const TaskBar = styled.div`
  display: flex;
  align-items: center;
  flex: none;
  height: 19px;
  padding: 1px 2px 0;
  gap: 1px;
  background: #d4d0c8;
  border-top: 1px solid #f4f2ee;
`;
const StartButton = styled.button`
  ${raised}
  display: flex;
  align-items: center;
  gap: 1px;
  flex: none;
  width: 32px;
  height: 15px;
  font: bold 7px/12px "Liberation Sans", Arial, sans-serif;
`;
const Task = styled.button<{ $on?: boolean; $open?: boolean }>`
  ${raised}
  display: flex;
  align-items: center;
  gap: 2px;
  flex: ${(p) => (p.$open ? "none" : "0 1 104px")};
  min-width: 0;
  height: 15px;
  padding-left: 2px;
  text-align: left;
  font-weight: ${(p) => (p.$on ? "bold" : "normal")};
  background: ${(p) => (p.$on ? "#ece9e4" : "transparent")};
  border-color: ${(p) => (p.$on ? "#555 #fff #fff #555" : "#fff #666 #666 #fff")};
  border-right-width: ${(p) => (p.$open ? "0" : "1px")};
`;
const TaskGap = styled.span`
  flex: none;
  width: 6px;
  padding-left: 1px;
  line-height: 0;
  & > ${Separator} { display: inline-block; }
`;
const Tray = styled.div`
  display: flex;
  align-items: center;
  gap: 2px;
  margin-left: auto;
`;
const Language = styled.span`
  width: 12px;
  color: #fff;
  font-weight: bold;
  text-align: center;
  background: #0a246a;
`;
const Clock = styled.div`
  ${sunken}
  display: flex;
  align-items: center;
  gap: 1px;
  height: 15px;
  padding: 0 4px 0 2px;
  time { margin-left: 5px; }
`;

/* ---------- windows ---------- */

const menus = ["File", "Edit", "Tools", "Group", "Views", "Create", "Modifiers", "Animation", "Graph Editors", "Rendering", "Customize", "MAXScript", "Help"];

function StripWindow() {
  return (
    <Pane $strip>
      <TitleBar $strip>
        <Icon name="max" />
        <AppName>Untitled</AppName>
        <TitlePart>- Proje</TitlePart>
      </TitleBar>
      <MenuBar>{["File", "Edit", "Tools", "Grou"].map((m) => <MenuItem key={m}>{m}</MenuItem>)}</MenuBar>
      <Toolbar>
        <Handle />
        <Tools names={["undo", "redo"]} />
        <Separator />
        <Tools names={["link", "unlink", "bind"]} />
      </Toolbar>
      <Workspace>
        <Stage>
          <Viewports $single>
            <Viewport $active $cut><StripScene /><ViewLabel>Top</ViewLabel></Viewport>
          </Viewports>
          <Timeline count={2} />
          <Toolbar $low>
            <Handle />
            <Tools names={["snapGrid", "snapPivot", "snapVertex", "snapEdge", "snapFace"]} on="snapVertex" />
          </Toolbar>
        </Stage>
      </Workspace>
      <Status $strip>
        <Listener>
          <ListenerInput $pink aria-label="Macro recorder" />
          <ListenerInput aria-label="Listener" defaultValue="'AXScript." />
        </Listener>
        <StripTail><StripCell>1</StripCell><StripCell>Cl</StripCell></StripTail>
      </Status>
      <TaskBar>
        <StartButton><Icon name="winflag" />Пуск</StartButton>
        <TaskGap><Separator /></TaskGap>
        <Task $open><Icon name="winamp" />BACK-</Task>
      </TaskBar>
    </Pane>
  );
}

function MainWindow() {
  return (
    <Pane>
      <TitleBar>
        <Icon name="max" />
        <AppName>Untitled</AppName>
        <TitlePart $gap>- Project Folder: \\srv1\UserData\art\Мои документы\3dsmax</TitlePart>
        <TitlePart $gap>- Autodesk 3ds Max&nbsp; 2009</TitlePart>
        <TitlePart>- Display : Direct 3D</TitlePart>
        <TitleTools>
          <TitleSlot />
          <WindowButton aria-label="Minimize"><svg viewBox="0 0 8 8"><path d="M1.500 6.500h4" stroke="#111" /></svg></WindowButton>
          <WindowButton aria-label="Restore"><svg viewBox="0 0 8 8"><path d="M3 3V1.500h4v3H5.500M1.500 3.500h4v3h-4z" fill="none" stroke="#111" /></svg></WindowButton>
          <WindowButton aria-label="Close"><svg viewBox="0 0 8 8"><path d="M1.500 1.500l5 5M6.500 1.500l-5 5" stroke="#111" strokeWidth="1.200" /></svg></WindowButton>
        </TitleTools>
      </TitleBar>
      <MenuBar>{menus.map((m) => <MenuItem key={m}>{m}</MenuItem>)}</MenuBar>
      <Toolbar>
        <Handle />
        <Tools names={["undo", "redo"]} />
        <Separator />
        <Tools names={["link", "unlink", "bind"]} />
        <Dropdown label="Selection filter" value="All" width="43px" before="3px" />
        <Tools names={["arrow", "byName", "rect", "crossing"]} on="arrow" />
        <Separator />
        <Tools names={["move", "rotate", "scale"]} />
        <Dropdown label="Reference coordinate system" value="View" width="43px" />
        <Tools names={["pivot"]} />
        <Separator />
        <Tools names={["manipulate", "keyboard"]} />
        <Separator />
        <Tools names={["snap3", "snapAngle", "snapPercent", "snapSpinner"]} />
        <Separator />
        <Tools names={["named"]} />
        <Dropdown label="Named selection sets" value="Create Selection Set" width="75px" dim />
        <Separator />
        <Tools names={["mirror", "align"]} />
        <Separator />
        <Tools names={["layers"]} />
        <Separator />
        <Tools names={["curve", "schematic"]} />
        <Separator />
        <Tools names={["material"]} />
        <Separator />
        <Tools names={["render", "frame", "teapot"]} />
        <Handle $wide />
        <TextTool>SR_B08x</TextTool>
      </Toolbar>
      <Workspace>
        <Stage>
          <Viewports>
            <Viewport><TopScene /><ViewLabel>Top</ViewLabel></Viewport>
            <Viewport><FrontScene /><ViewLabel>Front</ViewLabel></Viewport>
            <Viewport><LeftScene /><ViewLabel>Left</ViewLabel></Viewport>
            <Viewport $active><PerspectiveScene /><ViewLabel>Perspective</ViewLabel></Viewport>
            <QuadMenu />
          </Viewports>
          <Timeline count={21} />
          <Toolbar $low>
            <Handle />
            <Tools names={["snapGrid", "snapPivot", "snapVertex", "snapEdge", "snapFace"]} on="snapVertex" />
            <ToolButton aria-label="Snap to midpoint"><Icon name="snapEdge" /></ToolButton>
            <ToolButton aria-label="Snap to endpoint"><Icon name="snapFace" /></ToolButton>
            <Separator />
            <Tools names={["snapFreeze", "snapXY"]} />
            <Handle $wide />
            <Tools names={["layers"]} />
            <Dropdown label="Layer" value="0 (default)" width="131px" tall>
              <LayerIcons><Icon name="eye" /><Icon name="cursor" /><Icon name="greenpot" /><Icon name="swatch" /></LayerIcons>
            </Dropdown>
            <Tools names={["layerA", "layerB", "layerC", "layerD"]} />
            <Separator />
            <Handle />
            <ToolButton>X</ToolButton>
            <ToolButton $on>Y</ToolButton>
            <ToolButton>Z</ToolButton>
            <ToolButton>XY</ToolButton>
            <Tools names={["snapXY"]} />
            <Separator />
          </Toolbar>
        </Stage>
        <CommandPanel />
      </Workspace>
      <StatusArea />
      <TaskBar>
        <StartButton><Icon name="winflag" />Пуск</StartButton>
        <TaskGap><Separator /></TaskGap>
        <Task><Icon name="winamp" />K-ON - Butterfly - Winam...</Task>
        <Task><Icon name="commander" />Total Commander 6.54Я...</Task>
        <Task $on><Icon name="max" /><AppName>Untitled</AppName>- Project F...</Task>
        <Task><Icon name="paint" />11 - Paint</Task>
        <Task><Icon name="akel" />1.txt - AkelPad</Task>
        <Tray>
          <Separator />
          <Language>EN</Language>
          <Separator />
          <Icon name="help" />
          <Icon name="restore" />
          <Clock>«<Icon name="flower" /><Icon name="network" /><time>13:47</time></Clock>
        </Tray>
      </TaskBar>
    </Pane>
  );
}

export default function App() {
  return (
    <>
      <GlobalStyle />
      <Desktop>
        <StripWindow />
        <MainWindow />
      </Desktop>
    </>
  );
}
